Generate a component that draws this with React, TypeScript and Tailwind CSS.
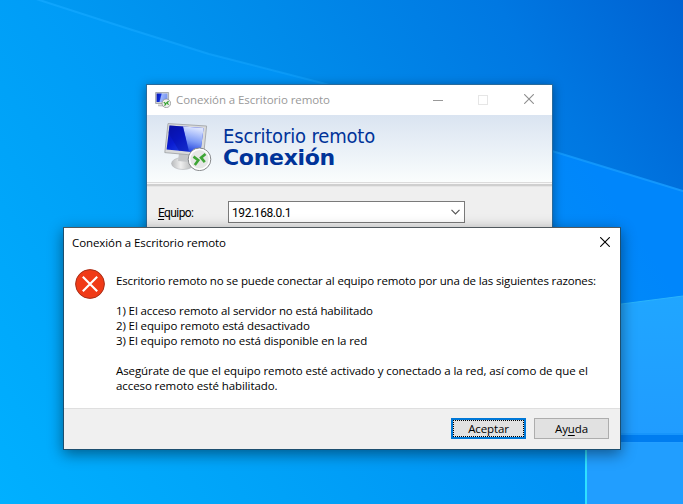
import React from "react";

function Wallpaper() {
  return (
    <svg className="absolute inset-0" width="683" height="504" viewBox="0 0 683 504">
      <defs>
        <linearGradient id="sky" x1="0" y1="420" x2="683" y2="0" gradientUnits="userSpaceOnUse">
          <stop offset="0" stopColor="#00aafb" />
          <stop offset="0.3" stopColor="#009bf3" />
          <stop offset="0.55" stopColor="#008bea" />
          <stop offset="0.8" stopColor="#0078e2" />
          <stop offset="1" stopColor="#0062d2" />
        </linearGradient>
        <linearGradient id="beam" x1="0" y1="504" x2="560" y2="120" gradientUnits="userSpaceOnUse">
          <stop offset="0" stopColor="#00b0ff" />
          <stop offset="0.35" stopColor="#00a2f8" />
          <stop offset="0.7" stopColor="#0092f4" />
          <stop offset="1" stopColor="#0086fb" />
        </linearGradient>
        <linearGradient id="pane" x1="0" y1="296" x2="0" y2="435" gradientUnits="userSpaceOnUse">
          <stop offset="0" stopColor="#20a6ff" />
          <stop offset="1" stopColor="#209cff" />
        </linearGradient>
        <linearGradient id="edge" x1="0" y1="0" x2="683" y2="0" gradientUnits="userSpaceOnUse">
          <stop offset="0" stopColor="#10a8ff" stopOpacity="0.9" />
          <stop offset="0.47" stopColor="#12a0fb" stopOpacity="0.55" />
          <stop offset="1" stopColor="#169aff" stopOpacity="0.9" />
        </linearGradient>
      </defs>
      <rect width="683" height="504" fill="url(#sky)" />
      <path d="M0 -10 L30 -3 L126 28 L209 54 L322 83 L552 151 L683 191 V504 H0Z" fill="url(#beam)" />
      <path d="M30 -3 L126 28 L209 54 L322 83 L552 151 L683 191" fill="none" stroke="url(#edge)" strokeWidth="2" />
      <path d="M560 312 L683 296 V435 H560Z" fill="url(#pane)" />
      <path d="M560 312 L683 296" stroke="#2bb4fb" strokeWidth="1" />
      <rect x="587" y="433" width="96" height="2" fill="#1795fb" />
      <rect x="587" y="435" width="96" height="7" fill="#007df0" />
      <rect x="587" y="442" width="96" height="62" fill="#219eff" />
      <rect x="587" y="442" width="96" height="1" fill="#259fff" />
      <rect x="585" y="442" width="2" height="62" fill="#2fe0ff" />
    </svg>
  );
}

function RemoteIcon() {
  return (
    <svg width="48" height="48" viewBox="0 0 48 48">
      <defs>
        <linearGradient id="screen" x1="0" y1="0" x2="0.9" y2="0.9">
          <stop offset="0" stopColor="#0a0e9e" />
          <stop offset="0.45" stopColor="#0a1cd2" />
          <stop offset="1" stopColor="#2a55ee" />
        </linearGradient>
        <linearGradient id="glare" x1="0.3" y1="0" x2="0.1" y2="1">
          <stop offset="0" stopColor="#dbe4ff" />
          <stop offset="0.5" stopColor="#7f9cf6" />
          <stop offset="1" stopColor="#1233d8" />
        </linearGradient>
        <linearGradient id="base" x1="0" y1="0" x2="1" y2="0">
          <stop offset="0" stopColor="#b9bbbd" />
          <stop offset="0.4" stopColor="#efefef" />
          <stop offset="1" stopColor="#a9abad" />
        </linearGradient>
      </defs>
      <ellipse cx="19" cy="40.5" rx="11.5" ry="6" fill="url(#base)" stroke="#b4b6b8" strokeWidth="0.6" />
      <path d="M15 30 L25 32 L25 39 L14 38Z" fill="#c4c6c8" />
      <path d="M4 0.6 L42.6 3 L39.5 33 L0.8 29.6Z" fill="#d9dadb" stroke="#a3a6a9" strokeWidth="0.9" />
      <path d="M5.5 2.4 L39.6 5 L36.4 29.8 L2.6 26.4Z" fill="url(#screen)" />
      <path d="M19 3.4 L39.6 5 L36.4 29.8 L25 28.7Z" fill="url(#glare)" />
      <path d="M5.5 2.4 L4.6 10 L15 27.7 L25 28.7 L19 3.4Z" fill="#0612a8" opacity="0.45" />
      <circle cx="35.5" cy="36.3" r="11.3" fill="#f1f1f1" stroke="#85878a" strokeWidth="1" />
      <circle cx="35.5" cy="36.3" r="9.9" fill="#e6e7e6" stroke="#fff" strokeWidth="1.4" />
      <path d="M29.5 33.6 L34.3 37.3 L30.8 42 M41.5 31 L37 34.7 L40.8 39.2" fill="none" stroke="#3fa535" strokeWidth="2.6" />
    </svg>
  );
}

function SmallRemoteIcon() {
  return (
    <svg width="16" height="16" viewBox="0 0 16 16">
      <defs>
        <linearGradient id="tiny" x1="0" y1="0" x2="1" y2="0.2">
          <stop offset="0" stopColor="#0a14b4" />
          <stop offset="0.4" stopColor="#1030d8" />
          <stop offset="0.5" stopColor="#9fb6fa" />
          <stop offset="1" stopColor="#7a97f2" />
        </linearGradient>
      </defs>
      <path d="M3 12.5 L9 12.5 L9 14.6 L3 14.3Z" fill="#c2c4c5" />
      <path d="M0.6 0.5 H13.6 V11.5 H0.6Z" fill="#d4d6d8" stroke="#8f9396" strokeWidth="0.7" />
      <path d="M1.6 1.5 H12.4 V10 H1.6Z" fill="url(#tiny)" />
      <circle cx="11.3" cy="11.3" r="4.3" fill="#eef0ee" stroke="#85878a" strokeWidth="0.7" />
      <path d="M8.8 10.2 L10.9 11.8 L9.5 13.6 M13.6 9.2 L11.8 10.8 L13.6 12.6" fill="none" stroke="#2f9e2a" strokeWidth="1.2" />
    </svg>
  );
}

function Cross({ color, size }: { color: string; size: number }) {
  return (
    <svg width={size} height={size} viewBox="0 0 10 10">
      <path d="M0.2 0.2 L9.8 9.8 M9.8 0.2 L0.2 9.8" stroke={color} strokeWidth="1.1" />
    </svg>
  );
}

function ConnectionWindow() {
  return (
    <section className="absolute left-[146px] top-[84px] h-[300px] w-[407px] border border-[#286a9c] bg-[#efefef] shadow-[0_2px_10px_rgba(0,0,0,0.38)]">
      <header className="flex h-[30px] items-center bg-white pl-2">
        <SmallRemoteIcon />
        <span className="ml-[5px] whitespace-nowrap font-['Open_Sans',sans-serif] text-[11.5px] leading-4 tracking-[-0.08px] text-[#999]">
          Conexión a Escritorio remoto
        </span>
        <div className="ml-auto flex items-center pr-[18px]">
          <div className="h-px w-[10px] bg-[#999]" />
          <div className="ml-[35px] h-[10px] w-[10px] border border-[#e6e6e6]" />
          <div className="-mt-[2px] ml-9">
            <Cross color="#8e8e8e" size={10} />
          </div>
        </div>
      </header>
      <div className="flex h-[67px] bg-linear-to-b from-[#dae4f1] to-[#fafdfd] pl-[17px] pt-2">
        <RemoteIcon />
        <div className="ml-[11px] mt-[2px] whitespace-nowrap text-[#003399]">
          <div className="font-['DejaVu_Sans_Condensed','DejaVu_Sans',sans-serif] text-[20px] leading-[22px] tracking-[-0.16px]">
            Escritorio remoto
          </div>
          <div className="font-['DejaVu_Sans',sans-serif] text-[22px] font-bold leading-[22px] tracking-[-0.3px]">
            Conexión
          </div>
        </div>
      </div>
      <div className="h-px bg-[#dcdcdc]" />
      <div className="h-px bg-[#f7f7f7]" />
      <div className="h-[2px] bg-[#cfcfcf]" />
      <div className="h-px bg-[#e5e5e5]" />
      <div className="flex items-center pl-[11px] pt-[14px] font-['Roboto',sans-serif] text-[12px] text-black">
        <span className="w-[70px] pt-[2px] tracking-[-0.6px]">
          <span className="underline underline-offset-2">E</span>quipo:
        </span>
        <div className="flex h-[22px] w-[237px] items-center justify-between border border-[#7a7a7a] bg-white pl-[3px] pr-1">
          <span className="pt-px tracking-[-0.4px]">192.168.0.1</span>
          <svg width="9" height="6" viewBox="0 0 9 6">
            <path d="M0.5 0.8 L4.5 4.8 L8.5 0.8" fill="none" stroke="#555" strokeWidth="1.2" />
          </svg>
        </div>
      </div>
    </section>
  );
}

function ErrorDialog() {
  return (
    <section className="absolute left-[63px] top-[227px] flex h-[223px] w-[558px] flex-col border border-[#1c4f70] border-t-[#50585d] bg-white font-['Open_Sans',sans-serif] text-[11.5px] leading-[15px] tracking-[-0.135px] text-black shadow-[0_4px_14px_rgba(0,0,0,0.45)]">
      <header className="flex h-[28px] items-center justify-between pl-2 pr-[10px]">
        <span className="whitespace-nowrap tracking-[-0.08px]">Conexión a Escritorio remoto</span>
        <Cross color="#000" size={10} />
      </header>
      <div className="flex flex-1 pl-[11px] pt-[13px]">
        <svg width="30" height="30" viewBox="0 0 30 30" className="shrink-0">
          <circle cx="15" cy="15" r="14.4" fill="#f03a17" stroke="#a6301a" strokeWidth="1" />
          <path d="M7.8 7.8 L22.2 22.2 M22.2 7.8 L7.8 22.2" stroke="#fff" strokeWidth="2.1" />
        </svg>
        <div className="ml-[11px] mt-1 whitespace-nowrap">
          <p>Escritorio remoto no se puede conectar al equipo remoto por una de las siguientes razones:</p>
          <div className="my-[15px] tracking-[-0.11px]">
            <p>1) El acceso remoto al servidor no está habilitado</p>
            <p>2) El equipo remoto está desactivado</p>
            <p>3) El equipo remoto no está disponible en la red</p>
          </div>
          <p className="tracking-[-0.09px]">
            Asegúrate de que el equipo remoto esté activado y conectado a la red, así como de que el
          </p>
          <p className="tracking-[-0.09px]">acceso remoto esté habilitado.</p>
        </div>
      </div>
      <footer className="flex h-[41px] justify-end gap-2 border-t border-[#dfdfdf] bg-[#f0f0f0] pr-[11px] pt-[9px]">
        <button className="h-[21px] w-[75px] border-2 border-[#0078d7] bg-[#e1e1e1]">
          <span className="flex h-full items-center justify-center border border-dotted border-black">Aceptar</span>
        </button>
        <button className="h-[21px] w-[75px] border border-[#adadad] bg-[#e1e1e1]">
          Ay<span className="underline underline-offset-2">u</span>da
        </button>
      </footer>
    </section>
  );
}

export default function App() {
  return (
    <main className="relative h-[504px] w-[683px] overflow-hidden">
      <Wallpaper />
      <ConnectionWindow />
      <ErrorDialog />
    </main>
  );
}
